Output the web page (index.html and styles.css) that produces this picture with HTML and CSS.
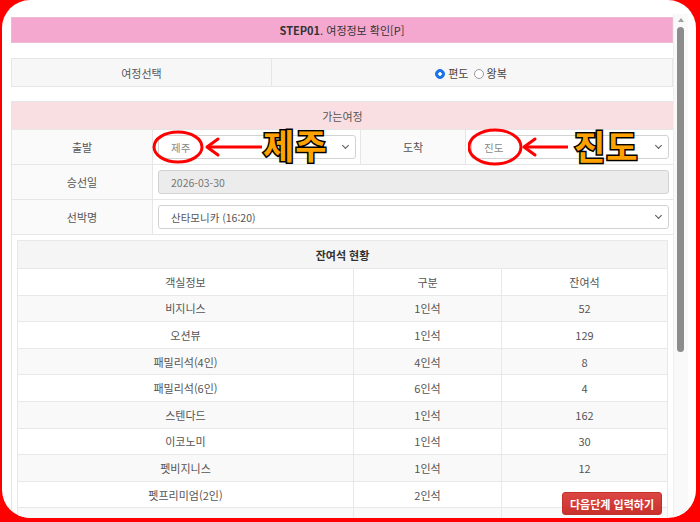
FILE: index.html
```html
<!DOCTYPE html>
<html lang="ko">
<head>
<meta charset="utf-8">
<title>STEP01 여정정보 확인</title>
<link rel="stylesheet" href="styles.css">
</head>
<body>
<div class="frame">
  <div class="viewport">
    <div class="page">
      <div class="step"><b>STEP01</b>. 여정정보 확인[P]</div>

      <table class="trip-type">
        <tr>
          <td class="tt-label">여정선택</td>
          <td class="tt-value">
            <span class="radio on"></span><span class="rlabel">편도</span>
            <span class="radio"></span><span class="rlabel">왕복</span>
          </td>
        </tr>
      </table>

      <table class="route">
        <tr><th colspan="4" class="route-head">가는여정</th></tr>
        <tr class="r-tall">
          <td class="lbl lbl-a">출발</td>
          <td class="val val-a"><div class="select"><span>제주</span><i class="chev"></i></div></td>
          <td class="lbl lbl-b">도착</td>
          <td class="val"><div class="select"><span>진도</span><i class="chev"></i></div></td>
        </tr>
        <tr class="r-tall">
          <td class="lbl">승선일</td>
          <td class="val" colspan="3"><div class="input disabled">2026-03-30</div></td>
        </tr>
        <tr class="r-tall">
          <td class="lbl">선박명</td>
          <td class="val" colspan="3"><div class="select white"><span class="dark">산타모니카 (16:20)</span><i class="chev"></i></div></td>
        </tr>
        <tr>
          <td colspan="4" class="nest">
            <table class="seats">
              <tr><th colspan="3" class="seat-head">잔여석 현황</th></tr>
              <tr class="colhead"><td class="c1">객실정보</td><td class="c2">구분</td><td class="c3">잔여석</td></tr>
              <tr class="odd"><td>비지니스</td><td>1인석</td><td>52</td></tr>
              <tr><td>오션뷰</td><td>1인석</td><td>129</td></tr>
              <tr class="odd"><td>패밀리석(4인)</td><td>4인석</td><td>8</td></tr>
              <tr><td>패밀리석(6인)</td><td>6인석</td><td>4</td></tr>
              <tr class="odd"><td>스텐다드</td><td>1인석</td><td>162</td></tr>
              <tr><td>이코노미</td><td>1인석</td><td>30</td></tr>
              <tr class="odd"><td>펫비지니스</td><td>1인석</td><td>12</td></tr>
              <tr><td>펫프리미엄(2인)</td><td>2인석</td><td></td></tr>
              <tr class="odd"><td></td><td></td><td></td></tr>
            </table>
          </td>
        </tr>
      </table>
    </div>
  </div>
  <div class="scrollbar"><div class="sb-up"></div><div class="sb-thumb"></div></div>

  <div class="note note-a">
    <svg class="mark" width="130" height="44" viewBox="0 0 130 44">
      <ellipse cx="26" cy="21" rx="24" ry="15" fill="none" stroke="#f00" stroke-width="3"/>
      <path d="M56 21 H110" stroke="#f00" stroke-width="3" fill="none"/>
      <path d="M66 13 L55 21 L66 29" stroke="#f00" stroke-width="3" fill="none" stroke-linejoin="round" stroke-linecap="round"/>
    </svg>
    <span class="big">제주</span>
  </div>
  <div class="note note-b">
    <svg class="mark" width="110" height="44" viewBox="0 0 110 44">
      <ellipse cx="27" cy="20" rx="26" ry="17" fill="none" stroke="#f00" stroke-width="3"/>
      <path d="M57 20 H100" stroke="#f00" stroke-width="3" fill="none"/>
      <path d="M67 12 L56 20 L67 28" stroke="#f00" stroke-width="3" fill="none" stroke-linejoin="round" stroke-linecap="round"/>
    </svg>
    <span class="big">진도</span>
  </div>

  <button class="next">다음단계 입력하기</button>
</div>
</body>
</html>
```

FILE: styles.css
```css
* { box-sizing: border-box; }
html, body { margin: 0; padding: 0; }
body {
  background: #ff0000;
  width: 700px;
  height: 522px;
  overflow: hidden;
  font-family: "Noto Sans CJK KR", "Noto Sans", sans-serif;
  color: #555;
}
.frame {
  position: relative;
  margin-left: 2px;
  width: 694px;
  height: 518px;
  background: #fff;
  border-radius: 28px;
  overflow: hidden;
  display: flex;
}
.viewport {
  width: 671px;
  height: 518px;
  padding: 17px 0 0 9px;
  overflow: hidden;
}
.page { width: 662px; }

.step {
  height: 26px;
  line-height: 24px;
  background: #f4a8cf;
  border: 1px solid #e9bcd2;
  text-align: center;
  font-size: 11px;
  color: #333;
}
.step b { font-weight: 700; }

table { border-collapse: collapse; width: 662px; }
td, th { padding: 0; font-size: 11px; text-align: center; font-weight: 400; }

.trip-type { margin-top: 15px; height: 28px; }
.trip-type td {
  border: 1px solid #e6e6e6;
  background: #f7f7f7;
  height: 28px;
  color: #555;
}
.tt-label { width: 260px; }
.tt-value { white-space: nowrap; }
.radio {
  display: inline-block;
  width: 10px; height: 10px;
  border-radius: 50%;
  border: 1px solid #999;
  background: #fff;
  vertical-align: -1px;
  margin-right: 3px;
}
.radio.on {
  background: radial-gradient(circle, #fff 0 1.5px, #1a73e8 2px);
  border-color: #1a73e8;
}
.rlabel { margin-right: 2px; color: #444; }

.route { margin-top: 14px; }
.route td, .route th { border: 1px solid #e6e6e6; }
.route-head {
  height: 28px;
  background: #f9dfe1;
  color: #555;
}
.r-tall td { height: 35px; }
.lbl { background: #fafafa; color: #555; width: 141px; }
.lbl-b { width: 105px; }
.val { padding: 0 4px 0 5px !important; background: #fff; text-align: left; }
.val-a { width: 208px; }

.select, .input {
  height: 24px;
  border: 1px solid #d2d2d2;
  border-radius: 3px;
  display: flex;
  align-items: center;
  padding: 0 7px 0 12px;
  font-size: 10.5px;
  color: #888;
  background: #fff;
}
.select span { flex: 1; }
.select .dark { color: #555; }
.input.disabled { background: #ececec; color: #777; }
.chev {
  width: 5px; height: 5px;
  border-right: 1.3px solid #555;
  border-bottom: 1.3px solid #555;
  transform: rotate(45deg);
  margin-top: -3px;
}

.nest { padding: 5px !important; border-bottom: none !important; }
.seats { width: 651px; }
.seats td, .seats th { border: 1px solid #e8e8e8; height: 26.6px; color: #555; }
.seat-head { background: #f5f5f5; font-weight: 700 !important; color: #333 !important; height: 28px !important; }
.seats .c1 { width: 336px; }
.seats .c2 { width: 148px; }
.seats tr td { background: #fff; }
.seats tr.odd td { background: #f9f9f9; }

.scrollbar {
  position: relative;
  width: 15px;
  margin-top: 14px;
  height: 504px;
  background: #f9f9f9;
  border-left: 1px solid #efefef;
}
.sb-up {
  position: absolute;
  left: 4px; top: 4px;
  width: 0; height: 0;
  border-left: 3px solid transparent;
  border-right: 3px solid transparent;
  border-bottom: 4px solid #a0a0a0;
}
.sb-thumb {
  position: absolute;
  left: 3px; top: 13px;
  width: 7px; height: 325px;
  background: #8c8c8c;
  border-radius: 4px;
}

.note { position: absolute; display: flex; align-items: center; }
.note-a { left: 150px; top: 126px; }
.note-b { left: 466px; top: 127px; }
.mark { display: block; }
.big {
  position: absolute;
  top: -3px;
  white-space: nowrap;
  font-size: 34px;
  font-weight: 700;
  color: #ffa200;
  -webkit-text-stroke: 3px #000;
  paint-order: stroke fill;
  line-height: 44px;
  letter-spacing: 1px;
}
.note-a .big { left: 111px; }
.note-b .big { left: 106px; }

.next {
  position: absolute;
  left: 560px; top: 492px;
  width: 100px; height: 23px;
  border: 1px solid #c2302c;
  border-radius: 3px;
  background: linear-gradient(#dc4743, #c9302c);
  color: #fff;
  font-family: "Noto Sans CJK KR", sans-serif;
  font-size: 11px;
  font-weight: 700;
  padding: 0;
}
```
